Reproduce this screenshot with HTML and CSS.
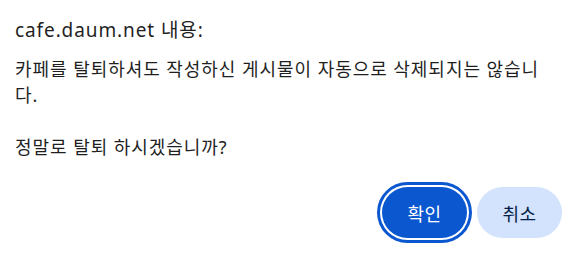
FILE: index.html
```html
<!DOCTYPE html>
<html lang="ko">
<head>
<meta charset="utf-8">
<link rel="stylesheet" href="styles.css">
</head>
<body>
<div class="dialog">
  <div class="title">cafe.daum.net 내용:</div>
  <div class="message">카페를 탈퇴하셔도 작성하신 게시물이 자동으로 삭제되지는 않습니다.<br><br>정말로 탈퇴 하시겠습니까?</div>
  <div class="actions">
    <button class="btn btn-primary">확인</button>
    <button class="btn btn-secondary">취소</button>
  </div>
</div>
</body>
</html>
```
FILE: styles.css
```css
html, body {
  margin: 0;
  padding: 0;
  background: #ffffff;
}
.dialog {
  width: 577px;
  height: 254px;
  box-sizing: border-box;
  padding: 17px 15px 16px 15px;
  font-family: "Noto Sans", "Noto Sans CJK KR", sans-serif;
  color: #1f1f1f;
  display: flex;
  flex-direction: column;
}
.title {
  font-size: 19px;
  line-height: 26px;
  letter-spacing: 0.9px;
}
.message {
  margin-top: 13px;
  font-size: 18px;
  line-height: 26px;
  letter-spacing: 0.95px;
  width: 530px;
}
.actions {
  margin-top: auto;
  display: flex;
  justify-content: flex-end;
  gap: 10px;
}
.btn {
  width: 85px;
  height: 51px;
  border: none;
  border-radius: 26px;
  font-family: "Noto Sans", "Noto Sans CJK KR", sans-serif;
  font-size: 18px;
  letter-spacing: 0.5px;
  padding: 0;
  cursor: pointer;
}
.btn-primary {
  background: #0b57d0;
  color: #ffffff;
  box-shadow: 0 0 0 2px #ffffff, 0 0 0 5px #0b57d0;
}
.btn-secondary {
  background: #d3e3fd;
  color: #041e49;
}
```
